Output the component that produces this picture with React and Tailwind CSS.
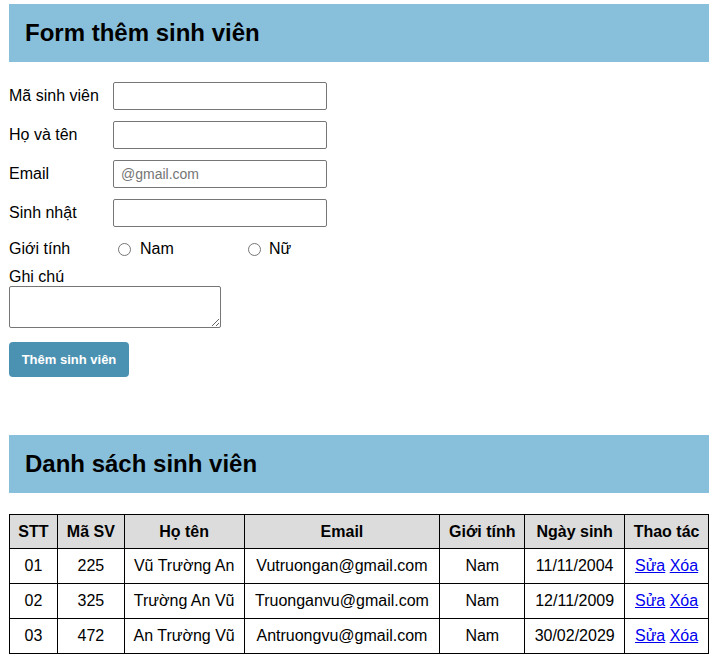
import { useState } from 'react';

const students = [
  { stt: '01', ma: '225', ten: 'Vũ Trường An', email: 'Vutruongan@gmail.com', gt: 'Nam', ns: '11/11/2004' },
  { stt: '02', ma: '325', ten: 'Trường An Vũ', email: 'Truonganvu@gmail.com', gt: 'Nam', ns: '12/11/2009' },
  { stt: '03', ma: '472', ten: 'An Trường Vũ', email: 'Antruongvu@gmail.com', gt: 'Nam', ns: '30/02/2029' },
];

function Field({ label, placeholder }) {
  return (
    <div className="flex items-center h-[28px] mb-[11px]">
      <label className="w-[104px]">{label}</label>
      <input
        type="text"
        placeholder={placeholder}
        className="w-[214px] h-[28px] border border-[#767676] rounded-[2px] px-[7px] text-[14px] placeholder:text-[#757575] outline-none"
      />
    </div>
  );
}

export default function App() {
  const [gender, setGender] = useState('');

  return (
    <div className="w-[700px] ml-[9px] pt-[4px] text-[16px] text-black font-['Liberation_Sans',Arial,sans-serif]">
      {/* Form */}
      <div className="bg-[#88c0dc] h-[58px] flex items-center px-[16px]">
        <h2 className="text-[24px] font-bold">Form thêm sinh viên</h2>
      </div>

      <div className="mt-[20px]">
        <Field label="Mã sinh viên" />
        <Field label="Họ và tên" />
        <Field label="Email" placeholder="@gmail.com" />
        <Field label="Sinh nhật" />

        {/* margin collapses with the field above, so 13px here */}
        <div className="flex items-center h-[18px] mt-[13px]">
          <span className="w-[104px]">Giới tính</span>
          <label className="w-[130px] flex items-center">
            <input
              type="radio"
              name="gt"
              checked={gender === 'Nam'}
              onChange={() => setGender('Nam')}
              className="w-[13px] h-[13px] ml-[5px] mr-[9px]"
            />
            Nam
          </label>
          <label className="flex items-center">
            <input
              type="radio"
              name="gt"
              checked={gender === 'Nữ'}
              onChange={() => setGender('Nữ')}
              className="w-[13px] h-[13px] ml-[5px] mr-[8px]"
            />
            Nữ
          </label>
        </div>

        <div className="mt-[10px] leading-[18px]">Ghi chú</div>
        <textarea className="block w-[212px] h-[42px] border border-[#767676] rounded-[2px] resize" />

        <button className="mt-[14px] w-[120px] h-[35px] bg-[#4b92b2] text-white text-[13px] font-bold rounded-[4px]">
          Thêm sinh viên
        </button>
      </div>

      {/* Danh sach */}
      <div className="mt-[58px] bg-[#88c0dc] h-[58px] flex items-center px-[16px]">
        <h2 className="text-[24px] font-bold">Danh sách sinh viên</h2>
      </div>

      <table className="mt-[21px] w-[700px] border-collapse border border-black text-center">
        <thead>
          <tr className="bg-[#dcdcdc] h-[34px] font-bold">
            <th className="border border-black w-[48px]">STT</th>
            <th className="border border-black w-[67px]">Mã SV</th>
            <th className="border border-black w-[120px]">Họ tên</th>
            <th className="border border-black w-[196px]">Email</th>
            <th className="border border-black w-[85px]">Giới tính</th>
            <th className="border border-black w-[100px]">Ngày sinh</th>
            <th className="border border-black w-[84px]">Thao tác</th>
          </tr>
        </thead>
        <tbody>
          {students.map((s) => (
            <tr key={s.stt} className="h-[35px]">
              <td className="border border-black">{s.stt}</td>
              <td className="border border-black">{s.ma}</td>
              <td className="border border-black">{s.ten}</td>
              <td className="border border-black">{s.email}</td>
              <td className="border border-black">{s.gt}</td>
              <td className="border border-black">{s.ns}</td>
              <td className="border border-black">
                <a href="#" className="text-[#0000ee] underline">Sửa</a>{' '}
                <a href="#" className="text-[#0000ee] underline">Xóa</a>
              </td>
            </tr>
          ))}
        </tbody>
      </table>
    </div>
  );
}
